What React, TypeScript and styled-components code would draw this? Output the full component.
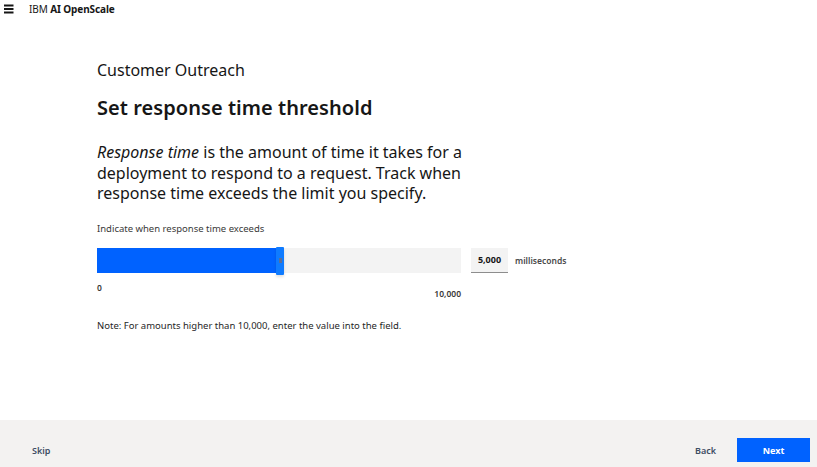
import React from "react";
import styled, { createGlobalStyle } from "styled-components";

const GlobalStyle = createGlobalStyle`
  html, body {
    margin: 0;
    padding: 0;
    background: #ffffff;
  }
  body {
    font-family: "Noto Sans", "Open Sans", Arial, sans-serif;
    color: #161616;
  }
`;

const Page = styled.div`
  display: flex;
  flex-direction: column;
  height: 467px;
  overflow: hidden;
`;

const Header = styled.header`
  display: flex;
  align-items: center;
  height: 18px;
  padding-left: 4px;
  gap: 15px;
`;

const Brand = styled.span`
  font-size: 10px;
  color: #161616;
  letter-spacing: -0.1px;

  b {
    font-weight: 700;
  }
`;

const Main = styled.main`
  flex: 1;
  padding: 41px 0 0 97px;
`;

const Eyebrow = styled.div`
  font-size: 16px;
  line-height: 22px;
  color: #161616;
`;

const Title = styled.h1`
  margin: 14px 0 0;
  font-size: 20px;
  line-height: 26px;
  font-weight: 600;
  letter-spacing: 0.05px;
`;

const Intro = styled.p`
  margin: 21px 0 0;
  width: 372px;
  font-size: 16px;
  line-height: 20.5px;
  color: #161616;
`;

const Term = styled.em`
  font-style: italic;
`;

const Label = styled.div`
  margin-top: 18px;
  font-size: 9.5px;
  line-height: 14px;
  color: #393939;
`;

const SliderRow = styled.div`
  display: flex;
  align-items: center;
  margin-top: 12px;
`;

const SliderBlock = styled.div`
  width: 364px;
`;

const Track = styled.div`
  position: relative;
  height: 25px;
  background: #f3f3f3;
`;

const Fill = styled.div`
  height: 100%;
  background: #0062ff;
`;

const Handle = styled.div`
  position: absolute;
  top: -1px;
  width: 8px;
  height: 28px;
  margin-left: -3px;
  background: #0f7bff;
  border-radius: 1px;
  box-shadow: 0 2px 3px rgba(0, 0, 0, 0.12);
  display: grid;
  place-items: center;
`;

const Grip = styled.div`
  width: 3px;
  height: 5px;
  background-image: radial-gradient(circle, #5a6f99 0.6px, transparent 0.8px);
  background-size: 1.5px 1.6px;
`;

const Ticks = styled.div`
  display: flex;
  justify-content: space-between;
  margin-top: 9px;
  font-size: 8.5px;
  color: #393939;
  font-weight: 600;
`;

const MaxTick = styled.span`
  margin-top: 6px;
`;

const ValueBox = styled.div`
  margin-left: 10px;
  width: 37px;
  height: 24px;
  background: #f3f3f3;
  border-bottom: 1px solid #8d8d8d;
  display: flex;
  align-items: center;
  justify-content: center;
  font-size: 9px;
  font-weight: 700;
  color: #161616;
`;

const Unit = styled.span`
  margin-left: 7px;
  font-size: 8.5px;
  font-weight: 600;
  color: #4a4a4a;
`;

const SliderAside = styled.div`
  display: flex;
  align-items: center;
  align-self: flex-start;
`;

const Note = styled.p`
  margin: 20px 0 0;
  font-size: 9.5px;
  color: #262626;
`;

const Footer = styled.footer`
  height: 47px;
  background: #f3f2f1;
  display: flex;
  align-items: center;
  padding: 0 7px 0 32px;
`;

const TextButton = styled.button<{ $gap?: number }>`
  border: none;
  background: none;
  padding: 0;
  margin-top: 13px;
  font-family: inherit;
  font-size: 9px;
  font-weight: 600;
  color: #3d4d63;
  margin-right: ${(p) => p.$gap ?? 0}px;
`;

const Spacer = styled.div`
  flex: 1;
`;

const PrimaryButton = styled.button`
  margin-top: 13px;
  width: 73px;
  height: 24px;
  border: none;
  background: #0062ff;
  color: #ffffff;
  font-family: inherit;
  font-size: 9px;
  font-weight: 700;
`;

const MenuIcon = () => (
  <svg width="10" height="10" viewBox="0 0 10 10">
    <rect x="0" y="0.5" width="9.5" height="2" fill="#161616" />
    <rect x="0" y="4" width="9.5" height="2" fill="#161616" />
    <rect x="0" y="7.5" width="9.5" height="2" fill="#161616" />
  </svg>
);

const value = 5000;
const max = 10000;

const App: React.FC = () => (
  <Page>
    <GlobalStyle />
    <Header>
      <MenuIcon />
      <Brand>
        IBM <b>AI OpenScale</b>
      </Brand>
    </Header>
    <Main>
      <Eyebrow>Customer Outreach</Eyebrow>
      <Title>Set response time threshold</Title>
      <Intro>
        <Term>Response time</Term> is the amount of time it takes for a deployment to respond to a
        request. Track when response time exceeds the limit you specify.
      </Intro>
      <Label>Indicate when response time exceeds</Label>
      <SliderRow>
        <SliderBlock>
          <Track>
            <Fill style={{ width: `${(value / max) * 100}%` }} />
            <Handle style={{ left: `${(value / max) * 100}%` }}>
              <Grip />
            </Handle>
          </Track>
          <Ticks>
            <span>0</span>
            <MaxTick>10,000</MaxTick>
          </Ticks>
        </SliderBlock>
        <SliderAside>
          <ValueBox>5,000</ValueBox>
          <Unit>milliseconds</Unit>
        </SliderAside>
      </SliderRow>
      <Note>Note: For amounts higher than 10,000, enter the value into the field.</Note>
    </Main>
    <Footer>
      <TextButton>Skip</TextButton>
      <Spacer />
      <TextButton $gap={21}>Back</TextButton>
      <PrimaryButton>Next</PrimaryButton>
    </Footer>
  </Page>
);

export default App;
